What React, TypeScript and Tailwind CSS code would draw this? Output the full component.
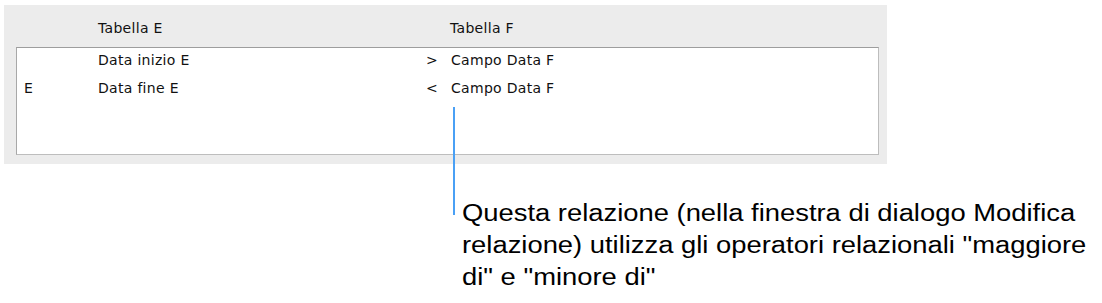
export default function App() {
  const rows = [
    { left: '', field: 'Data inizio E', op: '>', other: 'Campo Data F' },
    { left: 'E', field: 'Data fine E', op: '<', other: 'Campo Data F' },
  ];

  return (
    <div className="relative w-[1102px] h-[303px] bg-white overflow-hidden">
      {/* Pannello relazioni */}
      <div
        className="ml-[4px] mt-[5px] w-[883px] bg-[#ececec] pl-[12px] pr-[8px] pt-[15px] pb-[9px] text-[14px] tracking-[0.3px] text-[#111]"
        style={{ fontFamily: '"DejaVu Sans", sans-serif' }}
      >
        <div className="flex h-[16px] leading-[16px] mb-[11px]">
          <div className="w-[82px] shrink-0" />
          <div className="w-[352px] shrink-0">Tabella E</div>
          <div>Tabella F</div>
        </div>
        <div className="h-[108px] bg-white border border-[#bdbdbd] border-t-[#9d9d9d] border-l-[#a8a8a8] flex flex-col gap-[3px]">
          {rows.map((r, i) => (
            <div key={i} className="flex h-[25px] leading-[25px]">
              <div className="w-[81px] shrink-0 pl-[7px]">{r.left}</div>
              <div className="w-[328px] shrink-0">{r.field}</div>
              <div className="w-[25px] shrink-0">{r.op}</div>
              <div>{r.other}</div>
            </div>
          ))}
        </div>
      </div>

      {/* Linea di richiamo */}
      <div className="absolute left-[453px] top-[107px] h-[108px] w-[2px] bg-[#4aa0f5]" />

      {/* Didascalia */}
      <p
        className="ml-[462px] mt-[33px] w-[540px] origin-left scale-x-[1.19] text-[23px] leading-[32px] text-black whitespace-nowrap"
        style={{ fontFamily: '"Liberation Sans", Arial, sans-serif' }}
      >
        Questa relazione (nella finestra di dialogo Modifica
        <br />
        relazione) utilizza gli operatori relazionali "maggiore
        <br />
        di" e "minore di"
      </p>
    </div>
  );
}
